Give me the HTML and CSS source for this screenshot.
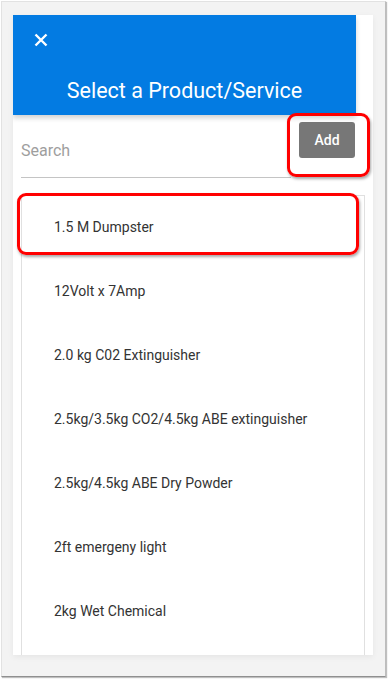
FILE: index.html
```html
<!DOCTYPE html>
<html>
<head>
<meta charset="utf-8">
<link rel="stylesheet" href="styles.css">
</head>
<body>
<div class="frame">
  <div class="panel">
    <div class="header">
      <button class="close" aria-label="Close">
        <svg width="14" height="14" viewBox="0 0 14 14"><path d="M1.5 1.5 L12.5 12.5 M12.5 1.5 L1.5 12.5" stroke="#fff" stroke-width="2.4" fill="none"/></svg>
      </button>
      <h1 class="title">Select a Product/Service</h1>
    </div>
    <div class="search-row">
      <div class="search">Search</div>
      <button class="add">Add</button>
    </div>
    <ul class="list">
      <li>1.5 M Dumpster</li>
      <li>12Volt x 7Amp</li>
      <li>2.0 kg C02 Extinguisher</li>
      <li>2.5kg/3.5kg CO2/4.5kg ABE extinguisher</li>
      <li>2.5kg/4.5kg ABE Dry Powder</li>
      <li>2ft emergeny light</li>
      <li>2kg Wet Chemical</li>
    </ul>
  </div>
</div>
<div class="mark mark-add"></div>
<div class="mark mark-item"></div>
</body>
</html>
```
FILE: styles.css
```css
* { box-sizing: border-box; }
html, body { margin: 0; padding: 0; background: #fff; }
body {
  width: 388px;
  height: 680px;
  position: relative;
  overflow: hidden;
  font-family: Roboto, "Liberation Sans", sans-serif;
}
.frame {
  margin: 1px 0 0 1px;
  width: 385px;
  height: 676px;
  border: 1px solid #e2e2e2;
  border-right-color: #bdbdbd;
  border-bottom-color: #8f8f8f;
  box-shadow: 1px 1px 1px rgba(0,0,0,0.25);
  background: #f3f3f3;
  padding: 13px 0 0 11px;
}
.panel {
  width: 360px;
  height: 640px;
  background: #fff;
  overflow: hidden;
  box-shadow: 0 2px 6px rgba(0,0,0,0.06);
  display: flex;
  flex-direction: column;
}
.header {
  flex: none;
  width: 343px;
  height: 100px;
  background: #037be2;
  box-shadow: 0 3px 5px rgba(0,0,0,0.18);
  position: relative;
  display: flex;
  flex-direction: column;
  padding: 18px 0 0 21px;
}
.close {
  width: 14px;
  height: 14px;
  padding: 0;
  border: 0;
  background: none;
  display: block;
}
.close svg { display: block; }
.title {
  margin: 31px 0 0 -21px;
  font-size: 21.5px;
  font-weight: 400;
  color: #fff;
  text-align: center;
  line-height: 26px;
}
.search-row {
  flex: none;
  display: flex;
  align-items: flex-start;
  height: 80px;
  padding: 7px 0 0 8px;
}
.search {
  width: 270px;
  height: 56px;
  border-bottom: 1px solid #c4c4c4;
  color: #9e9e9e;
  font-size: 16px;
  padding-top: 19px;
}
.add {
  margin-left: 8px;
  width: 56px;
  height: 36px;
  border: 0;
  border-radius: 3px;
  background: #777;
  color: #fff;
  font-family: Roboto, "Liberation Sans", sans-serif;
  font-size: 14px;
  font-weight: 500;
  padding: 0;
}
.list {
  flex: 1;
  list-style: none;
  margin: 0 0 0 8px;
  padding: 0;
  width: 344px;
  border: 1px solid #e0e0e0;
  border-bottom: 0;
}
.list li {
  height: 64px;
  display: flex;
  align-items: center;
  padding-left: 32px;
  font-size: 14px;
  color: #333;
}
.list li:first-child { margin-top: -1px; }
.mark {
  position: absolute;
  border: 3px solid #f00;
  border-radius: 9px;
  box-shadow: 1px 2px 3px rgba(0,0,0,0.35);
}
.mark-add { left: 287px; top: 113px; width: 83px; height: 64px; }
.mark-item { left: 17px; top: 193px; width: 342px; height: 62px; }
```
